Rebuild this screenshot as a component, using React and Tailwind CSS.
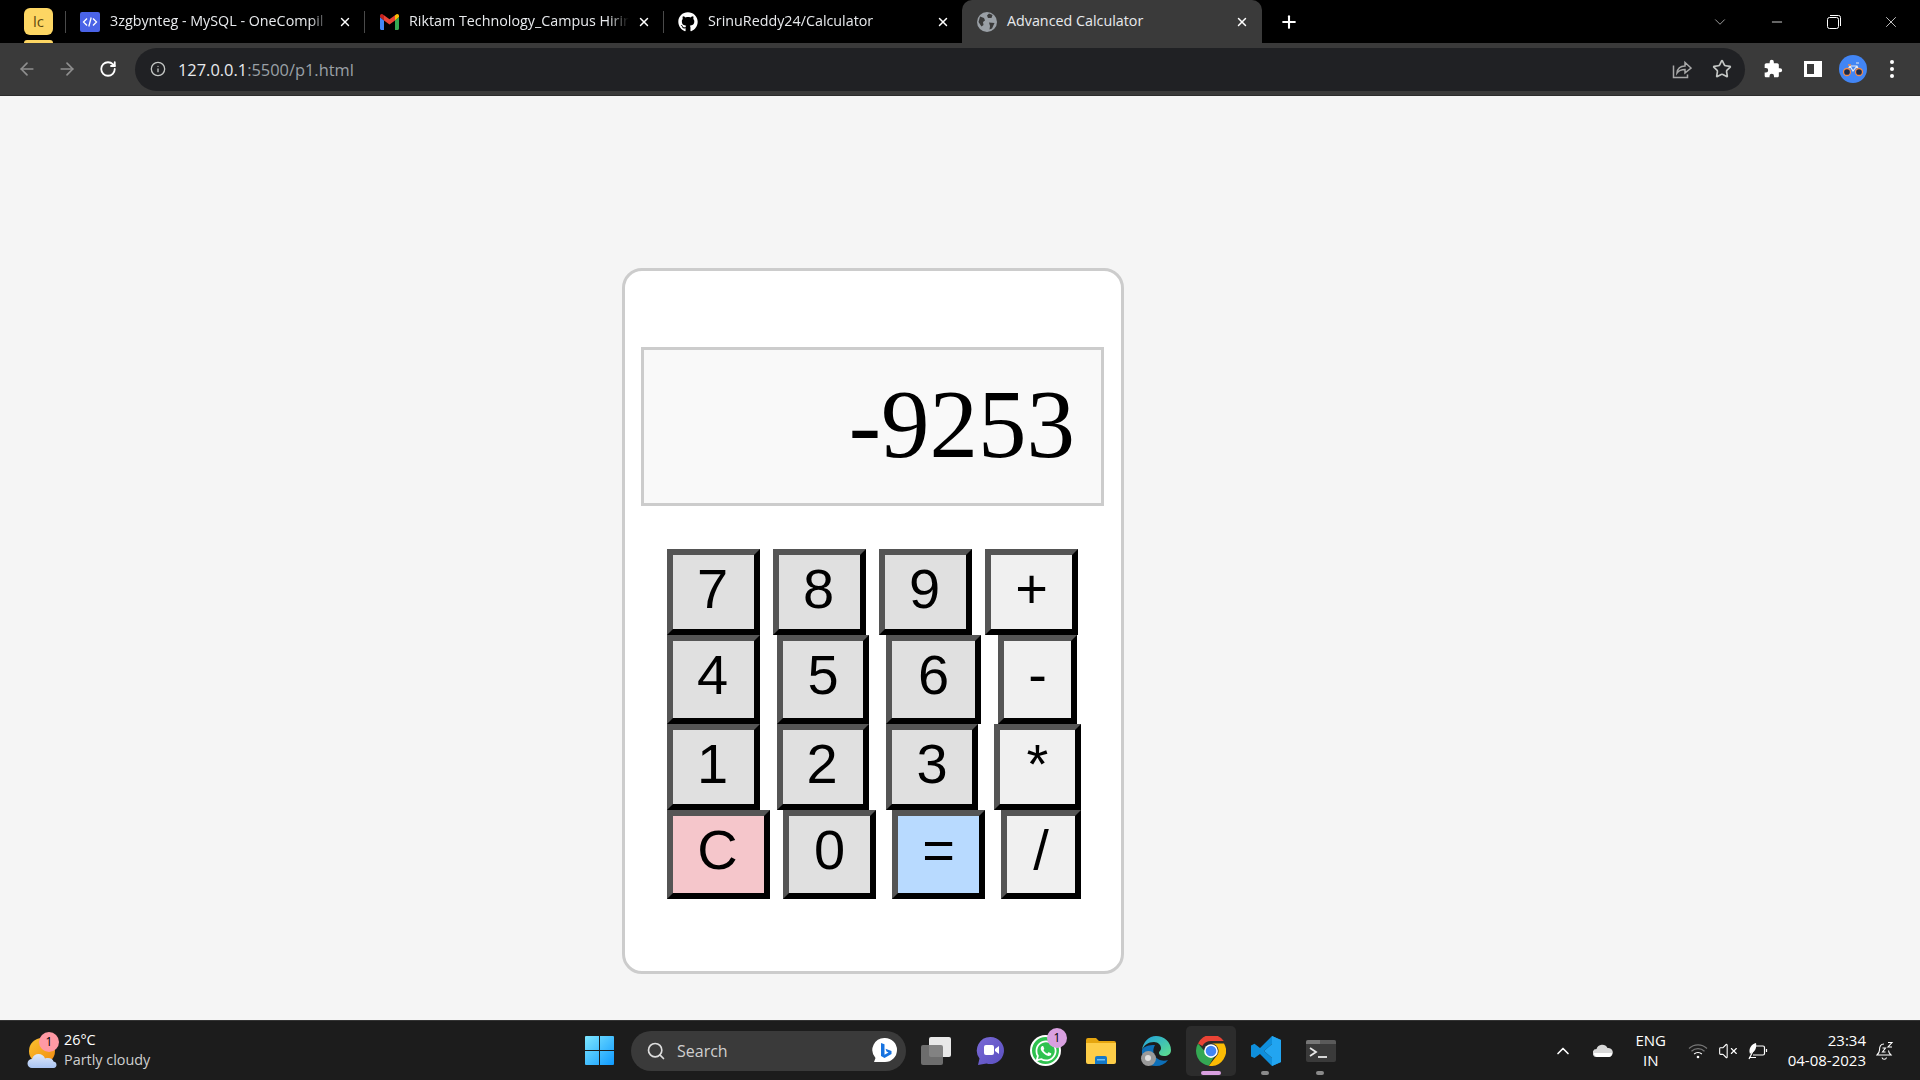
import { ArrowLeft, ArrowRight, RotateCw, Info, Star, Search, X, Plus, ChevronDown, ChevronUp, Minus, VolumeX } from 'lucide-react';
import { FaGithub, FaWhatsapp } from 'react-icons/fa';

const keyBase = 'flex items-center justify-center border-[6px] border-t-[#555] border-l-[#555] border-r-black border-b-black font-["Liberation_Sans",sans-serif] text-[56px] leading-none text-black';

function Key({ label, className }) {
  return <button className={`${keyBase} ${className}`}>{label}</button>;
}

function OneCompilerIcon() {
  return (
    <svg width="20" height="20" viewBox="0 0 20 20">
      <rect width="20" height="20" rx="2" fill="#4a63e7" />
      <path d="M7 6.500 3.500 10 7 13.500M13 6.500l3.500 3.500L13 13.500M11.200 5.500 8.800 14.500" fill="none" stroke="#fff" strokeWidth="1.300" />
    </svg>
  );
}

function GmailIcon() {
  return (
    <svg width="19" height="20" viewBox="0 0 19 16">
      <path d="M0 3v11.500C0 15.300.7 16 1.500 16H4V6.500Z" fill="#4285f4" />
      <path d="M15 6.500V16h2.500c.8 0 1.500-.7 1.500-1.500V3Z" fill="#34a853" />
      <path d="M0 3 4 6.500V1.200L2.500.3C1.300-.3 0 .6 0 2Z" fill="#c5221f" />
      <path d="M4 1.200v5.300L9.500 10.500 15 6.500V1.200L9.500 5.300Z" fill="#ea4335" />
      <path d="M15 1.200v5.300L19 3V2c0-1.400-1.300-2.300-2.500-1.700Z" fill="#fbbc04" />
    </svg>
  );
}

function GlobeIcon() {
  return (
    <svg width="20" height="20" viewBox="0 0 20 20">
      <circle cx="10" cy="10" r="10" fill="#9aa0a6" />
      <path d="M3 4.500 7 6l1 2.500-2 1.500.5 3-2 1.500L1.500 10ZM12 1.500l3.500 1.500-1 3H11l-1-2.500ZM12 10.500l5.500.5-2.500 5.500-2.500 1 .5-3.500Z" fill="#3a3a3a" />
    </svg>
  );
}

function Tab({ icon, title }) {
  return (
    <div className="flex items-center w-[299px] h-full shrink-0">
      <span className="w-px h-[22px] bg-[#4a4a4a] shrink-0" />
      <span className="ml-[14px] w-[20px] flex justify-center shrink-0">{icon}</span>
      <span className="ml-[10px] pb-[2px] w-[222px] whitespace-nowrap text-[14.3px] text-[#e8eaed] [mask-image:linear-gradient(to_right,black_90%,transparent_99%)]">{title}</span>
      <X size={14} strokeWidth={2.5} className="ml-[6px] text-white shrink-0" />
    </div>
  );
}

function ShareIcon() {
  return (
    <svg width="20" height="20" viewBox="0 0 20 20" fill="none" stroke="#a8a8a8" strokeWidth="1.500">
      <path d="M5.500 2v0M1.500 6.500v12h14v-3" />
      <path d="M5 14c.5-4.500 3.500-7 8-7V3.500l6 5.500-6 5v-3.500c-3.500 0-6 .8-8 3.500Z" />
    </svg>
  );
}

function PuzzleIcon() {
  return (
    <svg width="20" height="20" viewBox="0 0 24 24" fill="#fff">
      <path d="M20.500 11H19V7c0-1.100-.9-2-2-2h-4V3.500a2.500 2.500 0 0 0-5 0V5H4c-1.100 0-2 .9-2 2v3.800h1.500a2.700 2.700 0 0 1 0 5.400H2V20c0 1.100.9 2 2 2h3.800v-1.500a2.700 2.700 0 0 1 5.400 0V22H17c1.100 0 2-.9 2-2v-4h1.500a2.500 2.500 0 0 0 0-5Z" />
    </svg>
  );
}

function BikeAvatar() {
  return (
    <div className="w-[28px] h-[28px] rounded-full bg-[#4285f4] flex items-center justify-center">
      <svg width="22" height="16" viewBox="0 0 22 16" fill="none">
        <path d="M5 10 8 5h7l2 5M8 5l3 5 4-5M14 2h3" stroke="#e8eaed" strokeWidth="1.200" />
        <path d="M6 4h3" stroke="#f28b4b" strokeWidth="1.500" />
        <circle cx="5" cy="11" r="3.500" fill="#1b2a4a" stroke="#f28b4b" strokeWidth="1.300" />
        <circle cx="17" cy="11" r="3.500" fill="#1b2a4a" stroke="#f28b4b" strokeWidth="1.300" />
      </svg>
    </div>
  );
}

function WeatherIcon() {
  return (
    <div className="relative w-[30px] h-[38px]">
      <svg width="30" height="38" viewBox="0 0 30 38">
        <defs>
          <linearGradient id="sun" x1="0" y1="0" x2="1" y2="1">
            <stop offset="0" stopColor="#fcc22e" />
            <stop offset="1" stopColor="#f08a12" />
          </linearGradient>
          <linearGradient id="cloud" x1="0" y1="0" x2="0" y2="1">
            <stop offset="0" stopColor="#dfe9fb" />
            <stop offset="1" stopColor="#a9c4f2" />
          </linearGradient>
        </defs>
        <circle cx="15" cy="19" r="13" fill="url(#sun)" />
        <path d="M5 36a4.500 4.500 0 0 1 0-9c1-3.500 3.500-5 6.500-5 3 0 5.500 1.500 6.500 4.500 1-.5 2-.5 3-.5 3 0 5 1.500 5.500 3.500 2 .3 3 1.500 3 3.500 0 1.500-1 3-3 3Z" fill="url(#cloud)" />
      </svg>
      <span className="absolute left-[12px] top-0 w-[20px] h-[20px] rounded-full bg-[#ff99a4] text-black text-[12px] leading-[20px] text-center">1</span>
    </div>
  );
}

function WindowsLogo() {
  return (
    <svg width="29" height="29" viewBox="0 0 29 29">
      <defs>
        <linearGradient id="win" x1="0" y1="0" x2="1" y2="1">
          <stop offset="0" stopColor="#7de6ff" />
          <stop offset="1" stopColor="#0f9aff" />
        </linearGradient>
      </defs>
      <path d="M0 1a1 1 0 0 1 1-1h13v14H0ZM15 0h13a1 1 0 0 1 1 1v13H15ZM0 15h14v14H1a1 1 0 0 1-1-1ZM15 15h14v13a1 1 0 0 1-1 1H15Z" fill="url(#win)" />
    </svg>
  );
}

function BingIcon() {
  return (
    <svg width="26" height="28" viewBox="0 0 26 28">
      <path d="M13 1a12 12 0 0 1 0 24H2l1.500-4A12 12 0 0 1 13 1Z" fill="#fff" />
      <path d="M9 6l3.500 1.200v10.500l4-2.200-2-1-1-2.800 6 2.200v3L12.500 21 9 19Z" fill="#1672e0" />
    </svg>
  );
}

function TaskViewIcon() {
  return (
    <svg width="30" height="28" viewBox="0 0 30 28">
      <rect x="8" y="0" width="22" height="20" rx="2" fill="#e8e8e8" />
      <rect x="0" y="8" width="22" height="20" rx="2" fill="#777" fillOpacity="0.9" />
    </svg>
  );
}

function TeamsIcon() {
  return (
    <svg width="29" height="30" viewBox="0 0 29 30">
      <defs>
        <linearGradient id="teams" x1="0" y1="0" x2="1" y2="1">
          <stop offset="0" stopColor="#7a6ad6" />
          <stop offset="1" stopColor="#5a4fc0" />
        </linearGradient>
      </defs>
      <path d="M14.500 1a13.500 13.500 0 1 1-4 26.400L2 29l1.500-6.500A13.500 13.500 0 0 1 14.500 1Z" fill="url(#teams)" />
      <rect x="8" y="9" width="10" height="10" rx="2" fill="#fff" />
      <path d="m19 13 4-3v8l-4-3Z" fill="#fff" />
    </svg>
  );
}

function FolderIcon() {
  return (
    <svg width="30" height="26" viewBox="0 0 30 26">
      <path d="M0 2a2 2 0 0 1 2-2h8l3 3h15a2 2 0 0 1 2 2v4H0Z" fill="#e5a50f" />
      <path d="M0 5h30v19a2 2 0 0 1-2 2H2a2 2 0 0 1-2-2Z" fill="#fdcd48" />
      <path d="M9 20a2 2 0 0 1 2-2h8a2 2 0 0 1 2 2v6H9Z" fill="#1478c8" />
      <rect x="11" y="21" width="8" height="1.500" fill="#6cc0f5" />
    </svg>
  );
}

function EdgeIcon() {
  return (
    <div className="relative w-[30px] h-[30px]">
      <svg width="30" height="30" viewBox="0 0 30 30">
        <defs>
          <linearGradient id="edgeA" x1="0" y1="0" x2="1" y2="1">
            <stop offset="0" stopColor="#1fa0e0" />
            <stop offset="1" stopColor="#5fe08a" />
          </linearGradient>
        </defs>
        <path d="M1 14C2 6 8 0 15 0c8 0 15 6 15 14 0 4-3 6-7 6-3 0-5-1-5-3 0-2 2-2 2-5 0-3-3-6-7-6-6 0-10 3-12 8Z" fill="url(#edgeA)" />
        <path d="M1 14c-1 8 5 16 14 16 5 0 9-2 12-6-3 1-7 1-10-1-5-3-6-9-3-14-6 0-11 1-13 5Z" fill="#0d6fb8" />
      </svg>
      <span className="absolute left-0 bottom-0 w-[15px] h-[15px] rounded-full bg-[#9a9a9a] flex items-center justify-center">
        <span className="w-[6px] h-[6px] rounded-full bg-[#e0e0e0]" />
      </span>
    </div>
  );
}

function ChromeIcon() {
  return (
    <svg width="30" height="30" viewBox="0 0 48 48">
      <path d="M24 24 10.100 16A16 16 0 0 1 24 8h20.500A24 24 0 0 0 3.200 12Z" fill="#ea4335" />
      <path d="M3.200 12A24 24 0 0 0 20.500 47.700L31 29.500 24 32a8 8 0 0 1-7-4Z" fill="#34a853" />
      <path d="M44.800 12H24a12 12 0 0 1 10.400 18L20.500 47.700A24 24 0 0 0 44.800 12Z" fill="#fbbc04" />
      <circle cx="24" cy="24" r="11" fill="#fff" />
      <circle cx="24" cy="24" r="8.500" fill="#4285f4" />
    </svg>
  );
}

function VsCodeIcon() {
  return (
    <svg width="30" height="30" viewBox="0 0 30 30">
      <path d="M21 0 9 12 3.500 7.800 0 9.500v11L3.500 22 9 18l12 12 9-4V4ZM21 8v14l-8-7Z" fill="#0f8fdc" fillRule="evenodd" />
      <path d="M21 0v8l-8 7 8 7v8l9-4V4Z" fill="#22a5f1" />
    </svg>
  );
}

function TerminalIcon() {
  return (
    <svg width="30" height="22" viewBox="0 0 30 22">
      <rect width="30" height="22" rx="2" fill="#3a3a3a" />
      <path d="M0 2a2 2 0 0 1 2-2h12v4H0Z" fill="#777" />
      <path d="M14 0h14a2 2 0 0 1 2 2v2H14Z" fill="#5a5a5a" />
      <path d="m4 8 6 4-6 4" fill="none" stroke="#e8e8e8" strokeWidth="1.800" />
      <path d="M12 17h9" stroke="#e8e8e8" strokeWidth="1.800" />
    </svg>
  );
}

function OneDriveIcon() {
  return (
    <svg width="20" height="13" viewBox="0 0 20 13">
      <path d="M4 13a4 4 0 0 1-.5-8A6 6 0 0 1 14.500 4 4.500 4.500 0 0 1 16 13Z" fill="#d8d8d8" />
      <path d="M1 9h18a4 4 0 0 1-3 4H4a4 4 0 0 1-3-4Z" fill="#fff" />
    </svg>
  );
}

function WifiIcon() {
  return (
    <svg width="20" height="16" viewBox="0 0 20 16" fill="none" stroke="#777" strokeWidth="1.200">
      <path d="M1 5.500a13 13 0 0 1 18 0M3.500 8.200a9.500 9.500 0 0 1 13 0" />
      <path d="M6.200 11a5.500 5.500 0 0 1 7.600 0" stroke="#fff" />
      <circle cx="10" cy="14" r="1.300" fill="#fff" stroke="none" />
    </svg>
  );
}

function BatteryLeafIcon() {
  return (
    <svg width="20" height="18" viewBox="0 0 20 18" fill="none" stroke="#fff" strokeWidth="1.200">
      <path d="M8 4h7a1.500 1.500 0 0 1 1.500 1.500v6A1.500 1.500 0 0 1 15 13H5" />
      <path d="M18.500 7v3" />
      <path d="M2 12C0 6 4 2 8 1c1 5-1 9-5 10Z" fill="#fff" stroke="none" />
      <path d="M1 17 7 5M1 15.500h7" />
    </svg>
  );
}

function SnoozeBellIcon() {
  return (
    <svg width="18" height="20" viewBox="0 0 18 20" fill="none" stroke="#fff" strokeWidth="1.100">
      <path d="M8 3C4.500 3 3.500 6 3.500 9c0 2-1 3.500-2.500 5h14c-1.500-1.500-2.500-3-2.500-4.500" />
      <path d="M6 16.500a2.300 2.300 0 0 0 4.500 0" />
      <path d="M6.500 7h3l-3 4h3M12 1.500h4l-4 4.500h4" />
    </svg>
  );
}

function Dock({ children, badge }) {
  return (
    <div className="relative w-[55px] h-[50px] flex items-center justify-center shrink-0">
      {children}
      {badge}
    </div>
  );
}

export default function App() {
  return (
    <div className="w-screen h-screen flex flex-col overflow-hidden font-['Open_Sans',sans-serif]">
      {/* tab strip */}
      <div className="h-[43px] bg-black flex items-center shrink-0">
        <div className="w-[65px] h-full pl-[24px] shrink-0 relative">
          <div className="mt-[8px] w-[29px] h-[27px] rounded-[6px] bg-[#fdd663] flex items-center justify-center text-[15px] text-[#5f4a10]">lc</div>
          <div className="absolute left-[24px] bottom-0 w-[29px] h-[3px] rounded-t-[3px] bg-[#fdd663]" />
        </div>
        <Tab icon={<OneCompilerIcon />} title="3zgbynteg - MySQL - OneCompil" />
        <Tab icon={<GmailIcon />} title="Riktam Technology_Campus Hirin" />
        <Tab icon={<FaGithub size={20} color="#fff" />} title="SrinuReddy24/Calculator" />
        <div className="flex items-center w-[300px] h-full rounded-t-[10px] bg-[#3a3a3a] shrink-0">
          <span className="ml-[15px] w-[20px] flex justify-center shrink-0"><GlobeIcon /></span>
          <span className="ml-[10px] pb-[2px] flex-1 whitespace-nowrap text-[14.3px] text-[#e8eaed]">Advanced Calculator</span>
          <X size={14} strokeWidth={2.5} className="mr-[13px] text-white shrink-0" />
        </div>
        <Plus size={20} strokeWidth={2.5} className="ml-[17px] text-white shrink-0" />
        <div className="ml-auto flex items-center pr-[20px] text-white">
          <ChevronDown size={18} strokeWidth={1} className="text-[#ccc]" />
          <Minus size={16} strokeWidth={1.2} className="ml-[40px]" />
          <svg width="14" height="14" viewBox="0 0 14 14" fill="none" stroke="#fff" strokeWidth="1" className="ml-[42px]">
            <rect x="0.500" y="2.500" width="11" height="11" rx="2" />
            <path d="M3 .5h8.500a2 2 0 0 1 2 2V11" />
          </svg>
          <X size={18} strokeWidth={1} className="ml-[41px]" />
        </div>
      </div>

      {/* toolbar */}
      <div className="h-[53px] bg-[#3a3a3a] border-b border-b-[#2c2c2c] flex items-center shrink-0">
        <ArrowLeft size={20} className="ml-[17px] text-[#8f8f8f] shrink-0" />
        <ArrowRight size={20} className="ml-[20px] text-[#8f8f8f] shrink-0" />
        <RotateCw size={18} strokeWidth={2.4} className="ml-[22px] text-white shrink-0" />
        <div className="ml-[18px] w-[1610px] h-[43px] rounded-full bg-[#202124] flex items-center shrink-0">
          <Info size={16} className="ml-[15px] text-[#c4c7c5] shrink-0" />
          <span className="ml-[12px] pt-[3px] text-[16.4px] text-[#9aa0a6] whitespace-nowrap"><span className="text-[#e8eaed]">127.0.0.1</span>:5500/p1.html</span>
          <span className="ml-auto"><ShareIcon /></span>
          <Star size={20} className="ml-[20px] mr-[13px] text-[#c4c7c5]" />
        </div>
        <span className="ml-[18px]"><PuzzleIcon /></span>
        <div className="ml-[21px] w-[18px] h-[16px] border-[3px] border-white border-r-[8px]" />
        <div className="ml-[17px]"><BikeAvatar /></div>
        <div className="ml-[23px] flex flex-col gap-[3px]">
          <span className="w-[4px] h-[4px] rounded-full bg-white" />
          <span className="w-[4px] h-[4px] rounded-full bg-white" />
          <span className="w-[4px] h-[4px] rounded-full bg-white" />
        </div>
      </div>

      {/* page */}
      <main className="flex-1 bg-[#f5f5f5] pt-[172px] pl-[622px]">
        <div className="w-[502px] h-[706px] rounded-[20px] border-[3px] border-[#ccc] bg-white pt-[76px] px-4">
          <div className="h-[159px] mr-px border-[3px] border-[#ccc] bg-[#f9f9f9] flex items-center justify-end pr-[26px] pb-[4px] font-['Liberation_Serif',serif] text-[97px] text-black">-9253</div>
          <div className="mt-[43px] pl-[26px]">
            <div className="flex gap-[13px] h-[86px]">
              <Key label="7" className="w-[93px] pb-[6px] pr-[2px] bg-[#e0e0e0]" />
              <Key label="8" className="w-[93px] pb-[6px] pr-[2px] bg-[#e0e0e0]" />
              <Key label="9" className="w-[93px] pb-[6px] pr-[2px] bg-[#e0e0e0]" />
              <Key label="+" className="w-[93px] pb-[6px] bg-[#f0f0f0]" />
            </div>
            <div className="flex gap-[17px] h-[89px]">
              <Key label="4" className="w-[93px] pb-[10px] pr-[2px] bg-[#e0e0e0]" />
              <Key label="5" className="w-[92px] pb-[10px] bg-[#e0e0e0]" />
              <Key label="6" className="w-[95px] pb-[10px] bg-[#e0e0e0]" />
              <Key label="-" className="w-[79px] pb-[10px] bg-[#f0f0f0]" />
            </div>
            <div className="flex gap-[17px] h-[86px]">
              <Key label="1" className="w-[93px] pb-[6px] pr-[2px] bg-[#e0e0e0]" />
              <Key label="2" className="w-[92px] pb-[6px] pr-[2px] bg-[#e0e0e0]" />
              <Key label="3" className="w-[92px] mr-[-1px] pb-[6px] bg-[#e0e0e0]" />
              <Key label="*" className="w-[87px] pb-[6px] bg-[#f0f0f0]" />
            </div>
            <div className="flex gap-[16px] h-[89px]">
              <Key label="C" className="w-[103px] mr-[-3px] pb-[10px] pr-[2px] bg-[#f5c6cb]" />
              <Key label="0" className="w-[93px] pb-[10px] bg-[#e0e0e0]" />
              <Key label="=" className="w-[93px] pb-[10px] bg-[#b8daff]" />
              <Key label="/" className="w-[80px] pb-[10px] bg-[#f0f0f0]" />
            </div>
          </div>
        </div>
      </main>

      {/* taskbar */}
      <div className="h-[60px] bg-[#1c1c1c] border-t border-t-[#333] flex items-center shrink-0 text-white">
        <div className="ml-[27px] w-[558px] flex items-center shrink-0">
          <WeatherIcon />
          <div className="ml-[7px] pb-[2px] text-[14.4px] leading-[20px]">
            <div>26°C</div>
            <div className="text-[#cfcfcf]">Partly cloudy</div>
          </div>
        </div>
        <WindowsLogo />
        <div className="ml-[17px] w-[275px] h-[40px] rounded-full bg-[#3a3a3a] flex items-center shrink-0">
          <Search size={20} className="ml-[15px] text-[#ddd]" />
          <span className="ml-[11px] text-[16px] text-[#cfcfcf]">Search</span>
          <span className="ml-auto mr-[8px] flex"><BingIcon /></span>
        </div>
        <div className="ml-[15px] flex items-center">
          <TaskViewIcon />
          <div className="ml-[12px] flex items-center">
            <Dock><TeamsIcon /></Dock>
            <Dock badge={<span className="absolute left-[29px] top-[2px] w-[20px] h-[20px] rounded-full bg-[#d9a0e0] text-black text-[12px] leading-[20px] text-center">1</span>}>
              <span className="w-[31px] h-[31px] rounded-full bg-[#2fc24f] flex items-center justify-center border-2 border-white"><FaWhatsapp size={24} color="#fff" /></span>
            </Dock>
            <Dock><FolderIcon /></Dock>
            <Dock><EdgeIcon /></Dock>
            <Dock>
              <div className="relative w-[50px] h-[50px] rounded-[5px] bg-[#2c2c2c] flex items-center justify-center">
                <ChromeIcon />
                <span className="absolute left-[15px] bottom-[1px] w-[20px] h-[4px] rounded-full bg-[#d9a0e0]" />
              </div>
            </Dock>
            <Dock>
              <VsCodeIcon />
              <span className="absolute left-[23px] bottom-[1px] w-[8px] h-[4px] rounded-full bg-[#8a8a8a]" />
            </Dock>
            <Dock>
              <TerminalIcon />
              <span className="absolute left-[23px] bottom-[1px] w-[8px] h-[4px] rounded-full bg-[#8a8a8a]" />
            </Dock>
          </div>
        </div>
        <div className="ml-auto flex items-center pr-[26px]">
          <ChevronUp size={20} strokeWidth={2} />
          <span className="ml-[20px] flex"><OneDriveIcon /></span>
          <div className="ml-[20px] pb-[2px] w-[36px] text-center text-[15px] leading-[20px]">
            <div>ENG</div>
            <div>IN</div>
          </div>
          <span className="ml-[19px] flex"><WifiIcon /></span>
          <VolumeX size={20} strokeWidth={1.3} className="ml-[10px]" />
          <span className="ml-[10px] flex"><BatteryLeafIcon /></span>
          <div className="ml-[20px] pb-[2px] text-right text-[15px] leading-[20px]">
            <div>23:34</div>
            <div>04-08-2023</div>
          </div>
          <span className="ml-[10px] flex"><SnoozeBellIcon /></span>
        </div>
      </div>
    </div>
  );
}
